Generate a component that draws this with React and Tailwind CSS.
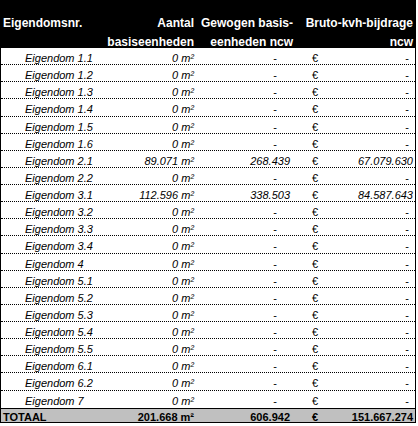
const ROWS = [
  { id: '1.1' },
  { id: '1.2' },
  { id: '1.3' },
  { id: '1.4' },
  { id: '1.5' },
  { id: '1.6' },
  { id: '2.1', m2: '89.071', ncw: '268.439', eur: '67.079.630' },
  { id: '2.2' },
  { id: '3.1', m2: '112.596', ncw: '338.503', eur: '84.587.643' },
  { id: '3.2' },
  { id: '3.3' },
  { id: '3.4' },
  { id: '4' },
  { id: '5.1' },
  { id: '5.2' },
  { id: '5.3' },
  { id: '5.4' },
  { id: '5.5' },
  { id: '6.1' },
  { id: '6.2' },
  { id: '7' },
];

const App = () => {
  return (
    <div className="w-[418px] h-[426px] bg-white text-black font-['Liberation_Sans',Arial,sans-serif]">
      <div className="w-[416px]">
        {/* Header */}
        <div className="grid grid-cols-[100px_98px_96px_122px] h-[48px] bg-black text-white font-bold text-[12px] leading-[19px] pt-[14px] whitespace-nowrap overflow-hidden">
          <div className="pl-[3px]">Eigendomsnr.</div>
          <div className="text-right pr-[4px]">
            Aantal
            <br />
            basiseenheden
          </div>
          <div className="text-right pr-[1px]">
            Gewogen basis-
            <br />
            eenheden ncw
          </div>
          <div className="text-right pr-[3px]">
            Bruto-kvh-bijdrage
            <br />
            ncw
          </div>
        </div>

        {/* Rows */}
        <div className="border-x border-black text-[11px] leading-[12px] whitespace-nowrap">
          {ROWS.map((r, i) => (
            <div
              key={r.id}
              className={`grid grid-cols-[99px_98px_96px_121px] h-[17.14px] pt-[4px] ${
                i < ROWS.length - 1 ? 'border-b border-dotted border-black' : ''
              }`}
            >
              <div className="pl-[24px] italic">Eigendom {r.id}</div>
              <div className="text-right pr-[4px] italic">{r.m2 || '0'} m²</div>
              {r.ncw ? (
                <div className="text-right pr-[4px] italic">{r.ncw}</div>
              ) : (
                <div className="text-right pr-[17px]">-</div>
              )}
              <div className="flex justify-between">
                <span className="pl-[18px]">€</span>
                {r.eur ? (
                  <span className="pr-[2px] italic">{r.eur}</span>
                ) : (
                  <span className="pr-[6px]">-</span>
                )}
              </div>
            </div>
          ))}

          {/* Totaal */}
          <div className="grid grid-cols-[99px_98px_96px_121px] h-[15px] border-y border-black bg-[#c0c0c0] font-bold pt-[2px]">
            <div className="pl-[2px]">TOTAAL</div>
            <div className="text-right pr-[4px]">201.668 m²</div>
            <div className="text-right pr-[4px]">606.942</div>
            <div className="flex justify-between">
              <span className="pl-[18px]">€</span>
              <span className="pr-[2px]">151.667.274</span>
            </div>
          </div>
        </div>
      </div>
    </div>
  );
};

export default App;
